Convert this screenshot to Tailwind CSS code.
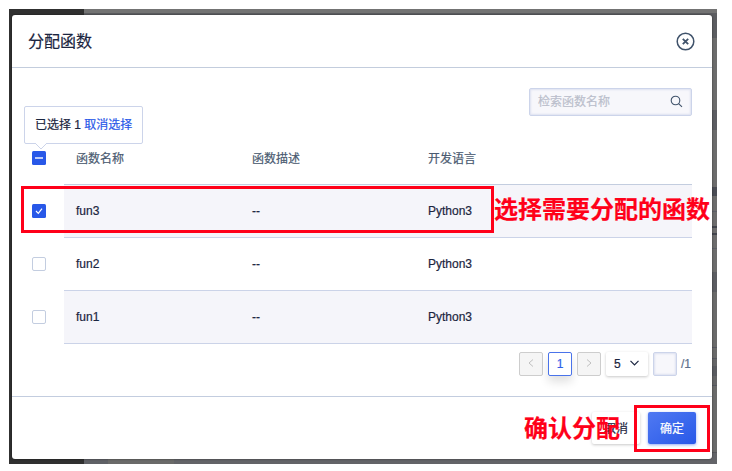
<!DOCTYPE html>
<html lang="zh-CN">
<head>
<meta charset="utf-8">
<title>分配函数</title>
<script src="https://cdn.jsdelivr.net/npm/@tailwindcss/browser@4"></script>
</head>
<body class="bg-white w-[732px] h-[471px] overflow-hidden font-['Liberation_Sans','Noto_Sans_CJK_SC',sans-serif] text-xs leading-4 text-[#1b2540] [-webkit-text-stroke:0.2px]">
<div class="relative w-[732px] h-[471px] pt-[9px] pl-[9px]">
  <!-- dimmed page behind the dialog -->
  <div class="relative w-[708px] h-[455px] bg-[#68686a] flex overflow-hidden">
    <div class="w-[75px] bg-[#303030]"></div>
    <div class="flex-1 flex flex-col">
      <div class="h-1 bg-[#737373]"></div>
      <div class="h-[25px] bg-[#5c5d61]"></div>
      <div class="h-[72px] bg-[#6c6c6c]"></div>
      <div class="h-5 bg-[#5c5d62]"></div>
      <div class="h-[142px] bg-[#6c6c6c] flex flex-col items-end">
        <div class="mt-[57px] w-[5px] h-[9px] bg-[#4a4c54]"></div>
        <div class="mt-[15px] w-[5px] h-px bg-[#5c5e66]"></div>
        <div class="mt-[14px] w-[5px] h-[9px] border-y-2 border-[#42444c]"></div>
        <div class="mt-[13px] w-[5px] h-px bg-[#5c5e66]"></div>
      </div>
      <div class="h-5 bg-[#5c5d62]"></div>
      <div class="h-[160px] bg-[#6a6a6a] flex flex-col items-end">
        <div class="mt-[55px] w-[5px] h-px bg-[#55575f]"></div>
        <div class="mt-[10px] w-[5px] h-[28px] border-y border-[#55575f] bg-[#656567] pt-[7px]"><div class="h-[10px] bg-[#5a5b60]"></div></div>
      </div>
      <div class="flex-1 flex bg-[#6a6a69]"><div class="w-6 bg-[#5f6166]"></div><div class="w-[66px]"></div><div class="flex-1 border-t border-[#55565a] bg-[#636468]"></div></div>
    </div>
  </div>

  <!-- dialog -->
  <div class="absolute left-[12px] top-[15px] w-[700px] h-[444px] bg-white rounded-[3px] shadow-[0_0_2px_rgba(0,0,0,0.6)] flex flex-col">
    <header class="h-[53px] shrink-0 border-b border-[#c3cddd] flex items-center justify-between pl-4 pr-[17px]">
      <h1 class="text-base leading-6 pt-0.5">分配函数</h1>
      <svg width="19" height="19" viewBox="0 0 19 19" fill="none" stroke="#40536b"><circle cx="9.5" cy="9.5" r="8.3" stroke-width="1.5"/><path d="M6.8 6.8l5.4 5.4M12.2 6.8l-5.4 5.4" stroke-width="1.8"/></svg>
    </header>
    <main class="h-[328px] shrink-0 pr-5 pt-5 pl-[13px]">
      <div class="ml-auto w-[163px] h-7 border border-[#ccd4ea] rounded-xs bg-[#f7f7fb] shadow-[inset_0_0_2px_1px_#dde1f0] flex items-center justify-between px-2">
        <span class="text-[#babecb]">检索函数名称</span>
        <svg class="-mt-px" width="13" height="13" viewBox="0 0 13 13" fill="none" stroke="#40536b" stroke-width="1.1"><circle cx="5.5" cy="5.5" r="4.3"/><path d="M8.6 8.6l3.4 3.3"/></svg>
      </div>
      <div class="mt-[15px] flex flex-col">
        <div class="flex h-[54px]">
          <div class="w-[39px] pt-5 pl-[7px]"><svg width="14" height="14" viewBox="0 0 14 14"><rect width="14" height="14" rx="1.5" fill="#2858e8"/><path d="M3 7h8" stroke="#fff" stroke-width="1.4"/></svg></div>
          <div class="flex-1 border-b border-[#c3cddf] grid grid-cols-[176px_176px_1fr] pl-3 pt-5 text-[#4a5a70]"><span>函数名称</span><span>函数描述</span><span>开发语言</span></div>
        </div>
        <div class="flex h-[53px]">
          <div class="w-[39px] pt-[19px] pl-[7px]"><svg width="14" height="14" viewBox="0 0 14 14"><rect width="14" height="14" rx="1.5" fill="#2858e8"/><path d="M4 7l2.3 2.4L10 4.6" fill="none" stroke="#fff" stroke-width="1.2"/></svg></div>
          <div class="flex-1 border-b border-[#cbd3e8] bg-[#f5f5fa] grid grid-cols-[176px_176px_1fr] items-center pl-3"><span>fun3</span><span>--</span><span>Python3</span></div>
        </div>
        <div class="flex h-[53px]">
          <div class="w-[39px] pt-[19px] pl-[7px]"><div class="size-3.5 border border-[#c3cde0] rounded-xs"></div></div>
          <div class="flex-1 border-b border-[#cbd3e8] grid grid-cols-[176px_176px_1fr] items-center pl-3"><span>fun2</span><span>--</span><span>Python3</span></div>
        </div>
        <div class="flex h-[53px]">
          <div class="w-[39px] pt-[19px] pl-[7px]"><div class="size-3.5 border border-[#c3cde0] rounded-xs"></div></div>
          <div class="flex-1 border-b border-[#cbd3e8] bg-[#f5f5fa] grid grid-cols-[176px_176px_1fr] items-center pl-3"><span>fun1</span><span>--</span><span>Python3</span></div>
        </div>
      </div>
      <div class="mt-2 flex justify-end items-center h-6">
        <div class="w-6 h-6 border border-[#cdcdcd] bg-[#f5f5f5] rounded-xs flex items-center justify-center"><svg class="-mt-0.5" width="6" height="8" viewBox="0 0 6 8" fill="none" stroke="#bfbfbf"><path d="M5 .5L1 4l4 3.5"/></svg></div>
        <div class="ml-[5px] w-6 h-6 border border-[#4a73ea] rounded-xs text-[#2f5fe8] flex items-center justify-center shadow-[0_6px_10px_rgba(0,0,0,0.12)]">1</div>
        <div class="ml-[5px] w-6 h-6 border border-[#cdcdcd] bg-[#f5f5f5] rounded-xs flex items-center justify-center"><svg class="-mt-0.5" width="6" height="8" viewBox="0 0 6 8" fill="none" stroke="#bfbfbf"><path d="M1 .5L5 4 1 7.5"/></svg></div>
        <div class="ml-[5px] w-[42px] h-6 rounded-xs shadow-[0_1px_3px_rgba(0,0,0,0.22)] flex items-center justify-between pl-2 pr-[9px]"><span>5</span><svg class="-mt-0.5" width="9" height="6" viewBox="0 0 9 6" fill="none" stroke="#1b2540" stroke-width="1.2"><path d="M.5 .8l4 4 4-4"/></svg></div>
        <div class="ml-[5px] w-6 h-6 border border-[#ccd4ea] bg-[#f7f7fb] rounded-xs shadow-[inset_0_0_2px_1px_#dde1f0]"></div>
        <span class="ml-1 mr-px text-[#5d6f8c]">/1</span>
      </div>
    </main>
    <footer class="flex-1 border-t border-[#c3cddf] flex justify-end items-center gap-2 pr-4">
      <button class="w-12 h-8 pt-0.5 rounded-xs bg-white shadow-[0_1px_3px_rgba(0,0,0,0.22)]">取消</button>
      <button class="w-12 h-8 pt-0.5 rounded-xs text-white bg-linear-to-br from-[#5079f2] to-[#2858e8] shadow-[0_1px_3px_rgba(40,88,232,0.5)]">确定</button>
    </footer>
  </div>

  <!-- selection tooltip -->
  <div class="absolute left-[24px] top-[106px] w-[119px] h-[38px] border border-[#ccd4ea] rounded-xs bg-white flex items-center pl-[10px] whitespace-pre"><span>已选择 1 </span><span class="text-[#2858e8]">取消选择</span>
    <svg class="absolute left-[9px] top-[36px]" width="14" height="7" viewBox="0 0 14 7"><path d="M1 0L7 6l6-6" fill="#fff" stroke="#ccd4ea"/></svg>
  </div>

  <!-- annotations -->
  <div class="absolute left-[21px] top-[186px] w-[473px] h-[47px] border-3 border-[#ff0019]"></div>
  <div class="absolute left-[494px] top-[192px] text-2xl leading-9 font-bold text-[#ff0019] whitespace-nowrap">选择需要分配的函数</div>
  <div class="absolute left-[634px] top-[405px] w-[76px] h-[47px] border-3 border-[#ff0019]"></div>
  <div class="absolute left-[524px] top-[411px] text-2xl leading-9 font-bold text-[#ff0019] whitespace-nowrap">确认分配</div>
</div>
</body>
</html>
